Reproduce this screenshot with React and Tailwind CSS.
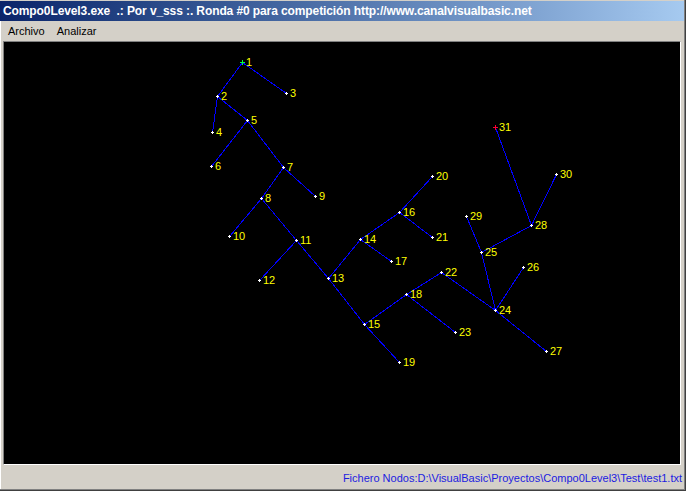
import React from 'react';

const nodes = {
  1: [242, 62], 2: [217, 96], 3: [286, 93], 4: [212, 132], 5: [247, 120],
  6: [211, 166], 7: [283, 167], 8: [261, 198], 9: [315, 196], 10: [229, 236],
  11: [296, 240], 12: [259, 280], 13: [328, 278], 14: [360, 239], 15: [364, 324],
  16: [399, 212], 17: [391, 261], 18: [406, 294], 19: [399, 362], 20: [432, 176],
  21: [432, 237], 22: [441, 272], 23: [455, 332], 24: [495, 310], 25: [481, 252],
  26: [523, 267], 27: [546, 351], 28: [531, 225], 29: [466, 216], 30: [556, 174],
  31: [495, 127],
};

const edges = [
  [1, 2], [1, 3], [2, 4], [2, 5], [5, 6], [5, 7], [7, 8], [7, 9], [8, 10], [8, 11],
  [11, 12], [11, 13], [13, 14], [13, 15], [14, 16], [14, 17], [16, 20], [16, 21],
  [15, 18], [15, 19], [18, 22], [18, 23], [22, 24], [24, 25], [24, 26], [24, 27],
  [25, 28], [25, 29], [28, 30], [28, 31],
];

const Plus = ({ x, y, color, big }) => {
  const r = big ? 2 : 1;
  return (
    <g fill={color}>
      <rect x={x - r} y={y} width={r * 2 + 1} height={1} />
      <rect x={x} y={y - r} width={1} height={r * 2 + 1} />
    </g>
  );
};

const Graph = () => (
  <svg width="676" height="422" className="block" shapeRendering="crispEdges">
    <g transform="translate(-4,-42)">
      {edges.map(([a, b]) => (
        <line
          key={`${a}-${b}`}
          x1={nodes[a][0] + 0.5}
          y1={nodes[a][1] + 0.5}
          x2={nodes[b][0] + 0.5}
          y2={nodes[b][1] + 0.5}
          stroke="#0000ff"
          strokeWidth="1"
        />
      ))}
      {Object.entries(nodes).map(([id, [x, y]]) => (
        <g key={id}>
          <Plus
            x={x}
            y={y}
            big={id === '1' || id === '31'}
            color={id === '1' ? '#00ff40' : id === '31' ? '#ff0030' : '#ffffff'}
          />
          <text
            x={x + 4}
            y={y + 4}
            fill="#ffff00"
            fontSize="11"
            fontFamily='"Liberation Sans", sans-serif'
          >
            {id}
          </text>
        </g>
      ))}
    </g>
  </svg>
);

export default function App() {
  return (
    <div className="w-[686px] h-[491px] bg-[#d4d0c8] border-r border-b border-[#404040] overflow-hidden font-['Liberation_Sans',sans-serif]">
      <div className="h-full flex flex-col border-r border-b border-[#808080] pt-px">
        {/* Title bar */}
        <div className="h-[20px] shrink-0 flex items-center pl-[3px] bg-gradient-to-r from-[#0a246a] to-[#a6caf0]">
          <span className="text-white font-bold text-[12px] tracking-[-0.1px] whitespace-pre">
            Compo0Level3.exe  .: Por v_sss :. Ronda #0 para competición http://www.canalvisualbasic.net
          </span>
        </div>

        <div className="flex-1 flex flex-col border-l border-white">
          {/* Menu */}
          <div className="h-[20px] shrink-0 flex items-center text-[11px] text-black">
            <span className="ml-[7px]">Archivo</span>
            <span className="ml-[12px]">Analizar</span>
          </div>

          {/* Canvas */}
          <div className="ml-[2px] mr-[3px] h-[424px] shrink-0 border border-t-[#808080] border-l-[#808080] border-b-white border-r-white bg-black">
            <Graph />
          </div>

          {/* Status bar */}
          <div className="flex-1 flex items-center justify-end pr-[2px] pt-[2px]">
            <span className="text-[11px] text-[#1c1ce0] whitespace-nowrap">
              Fichero Nodos:D:\VisualBasic\Proyectos\Compo0Level3\Test\test1.txt
            </span>
          </div>
        </div>
      </div>
    </div>
  );
}
